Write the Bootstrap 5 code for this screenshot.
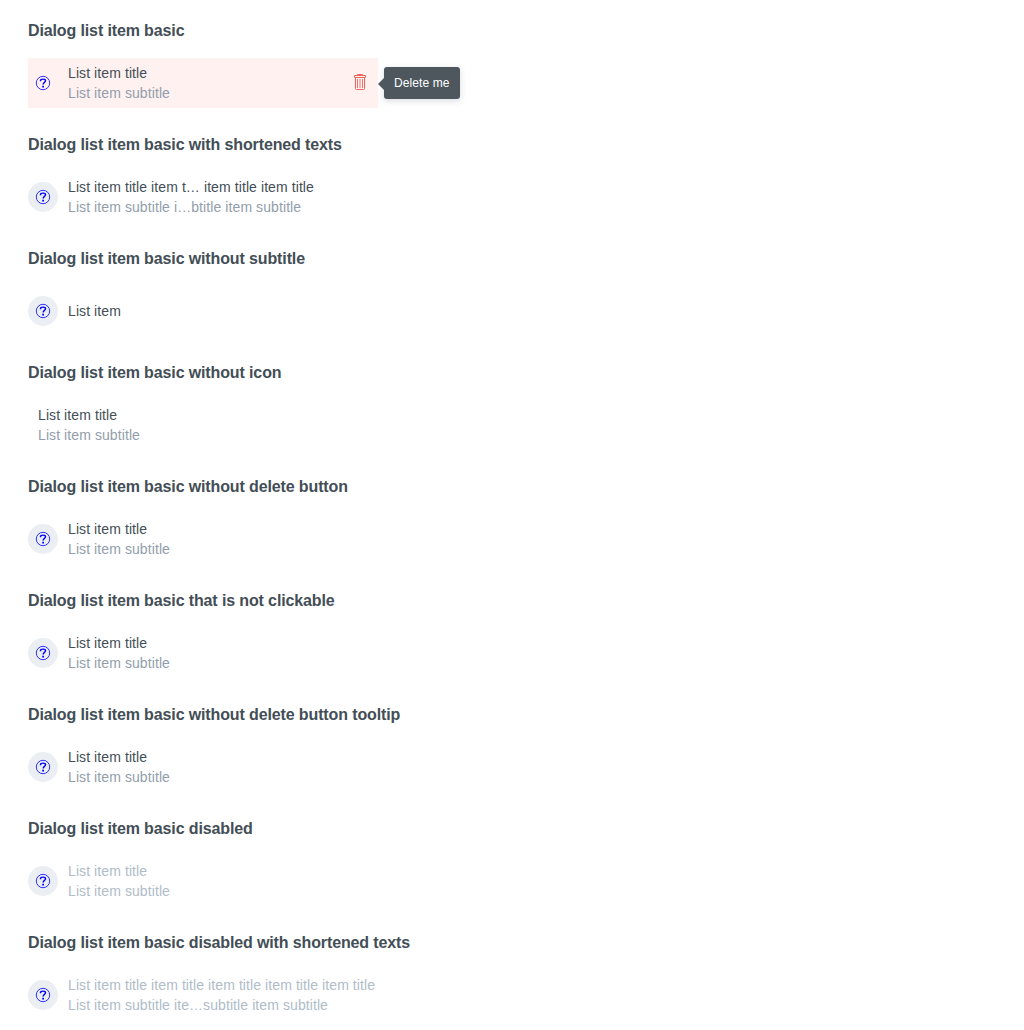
<!DOCTYPE html>
<html lang="en">
<head>
<meta charset="utf-8">
<meta name="viewport" content="width=device-width, initial-scale=1">
<title>Dialog list item</title>
<link href="https://cdn.jsdelivr.net/npm/bootstrap@5.3.0/dist/css/bootstrap.min.css" rel="stylesheet">
<style>
body{font-family:"Liberation Sans",Arial,sans-serif;font-size:14px;line-height:20px;letter-spacing:.089px;color:#434e56;background:#fff}
main{padding:21px 28px 0}
.dl-section{height:114px}
.dl-section:last-child{height:100px}
.dl-heading{font-size:16px;line-height:20px;font-weight:700;letter-spacing:-.125px;color:#434e56;margin:0 0 17px}
.dl-item{width:350px;height:50px}
.dl-icon{width:30px;height:30px;background:#ebeef3;margin-right:10px;color:#00f}
.dl-icon svg,.dl-trash svg{display:block}
.dl-bare{margin-left:10px}
.dl-sub{color:#929eac}
.dl-off,.dl-off .dl-sub{color:#b0bcc8}
.dl-danger{background:#fff1f0}
.dl-danger .dl-icon{background:transparent}
.dl-trash{color:#f0655f;margin:0 10px 2px 0}
.dl-tip{left:356px;top:9px;width:76px;height:32px;padding:0 10px;background:#4d575d;color:#fff;font-size:12px;border-radius:3px;box-shadow:0 2px 6px rgba(60,80,110,.2)}
.dl-tip::before{content:"";position:absolute;left:-6px;top:11px;border:6px solid transparent;border-left:0;border-right-color:#4d575d}
</style>
<script src="https://cdn.jsdelivr.net/npm/bootstrap@5.3.0/dist/js/bootstrap.bundle.min.js"></script>
</head>
<body>
<svg width="0" height="0" class="position-absolute" aria-hidden="true">
<symbol id="help" viewBox="0 0 16 16"><circle cx="8" cy="8" r="6.700" fill="none" stroke="currentColor" stroke-width=".8"/><path d="M5.500 6.300V5.700C5.500 4.500 6.500 4.100 8 4.100s2.500.5 2.500 1.700C10.500 7.500 8.200 7.300 8.200 9.500" fill="none" stroke="currentColor" stroke-width="1.450"/><path d="M7.200 10.800h1.800v1.700H7.200z" fill="currentColor"/></symbol>
</svg>
<main>
<section class="dl-section"><h2 class="dl-heading">Dialog list item basic</h2>
<div class="dl-item dl-danger d-flex align-items-center position-relative"><span class="dl-icon rounded-circle d-flex align-items-center justify-content-center"><svg width="16" height="16"><use href="#help"/></svg></span><div class="flex-grow-1"><div>List item title</div><div class="dl-sub">List item subtitle</div></div>
<span class="dl-trash"><svg width="16" height="18" viewBox="0 0 16 18" fill="none" stroke="currentColor"><path d="M5.500 2.500V1.500h5v1M2.500 4.500v-2h11v2zM3.500 4.500v11q0 1 1 1h7q1 0 1-1v-11"/><path stroke-width=".9" d="M5.500 6v9M8 6v9M10.500 6v9"/></svg></span>
<span class="dl-tip position-absolute d-flex align-items-center text-nowrap" role="tooltip">Delete me</span></div></section>
<section class="dl-section"><h2 class="dl-heading">Dialog list item basic with shortened texts</h2>
<div class="dl-item d-flex align-items-center"><span class="dl-icon rounded-circle d-flex align-items-center justify-content-center"><svg width="16" height="16"><use href="#help"/></svg></span><div class="text-nowrap"><div>List item title item t… item title item title</div><div class="dl-sub">List item subtitle i…btitle item subtitle</div></div></div></section>
<section class="dl-section"><h2 class="dl-heading">Dialog list item basic without subtitle</h2>
<div class="dl-item d-flex align-items-center"><span class="dl-icon rounded-circle d-flex align-items-center justify-content-center"><svg width="16" height="16"><use href="#help"/></svg></span><div>List item</div></div></section>
<section class="dl-section"><h2 class="dl-heading">Dialog list item basic without icon</h2>
<div class="dl-item d-flex align-items-center"><div class="dl-bare"><div>List item title</div><div class="dl-sub">List item subtitle</div></div></div></section>
<section class="dl-section"><h2 class="dl-heading">Dialog list item basic without delete button</h2>
<div class="dl-item d-flex align-items-center"><span class="dl-icon rounded-circle d-flex align-items-center justify-content-center"><svg width="16" height="16"><use href="#help"/></svg></span><div><div>List item title</div><div class="dl-sub">List item subtitle</div></div></div></section>
<section class="dl-section"><h2 class="dl-heading">Dialog list item basic that is not clickable</h2>
<div class="dl-item d-flex align-items-center"><span class="dl-icon rounded-circle d-flex align-items-center justify-content-center"><svg width="16" height="16"><use href="#help"/></svg></span><div><div>List item title</div><div class="dl-sub">List item subtitle</div></div></div></section>
<section class="dl-section"><h2 class="dl-heading">Dialog list item basic without delete button tooltip</h2>
<div class="dl-item d-flex align-items-center"><span class="dl-icon rounded-circle d-flex align-items-center justify-content-center"><svg width="16" height="16"><use href="#help"/></svg></span><div><div>List item title</div><div class="dl-sub">List item subtitle</div></div></div></section>
<section class="dl-section"><h2 class="dl-heading">Dialog list item basic disabled</h2>
<div class="dl-item dl-off d-flex align-items-center"><span class="dl-icon rounded-circle d-flex align-items-center justify-content-center"><svg width="16" height="16"><use href="#help"/></svg></span><div><div>List item title</div><div class="dl-sub">List item subtitle</div></div></div></section>
<section class="dl-section"><h2 class="dl-heading">Dialog list item basic disabled with shortened texts</h2>
<div class="dl-item dl-off d-flex align-items-center"><span class="dl-icon flex-shrink-0 rounded-circle d-flex align-items-center justify-content-center"><svg width="16" height="16"><use href="#help"/></svg></span><div class="text-nowrap"><div>List item title item title item title item title item title</div><div class="dl-sub">List item subtitle ite…subtitle item subtitle</div></div></div></section>
</main>
</body>
</html>
